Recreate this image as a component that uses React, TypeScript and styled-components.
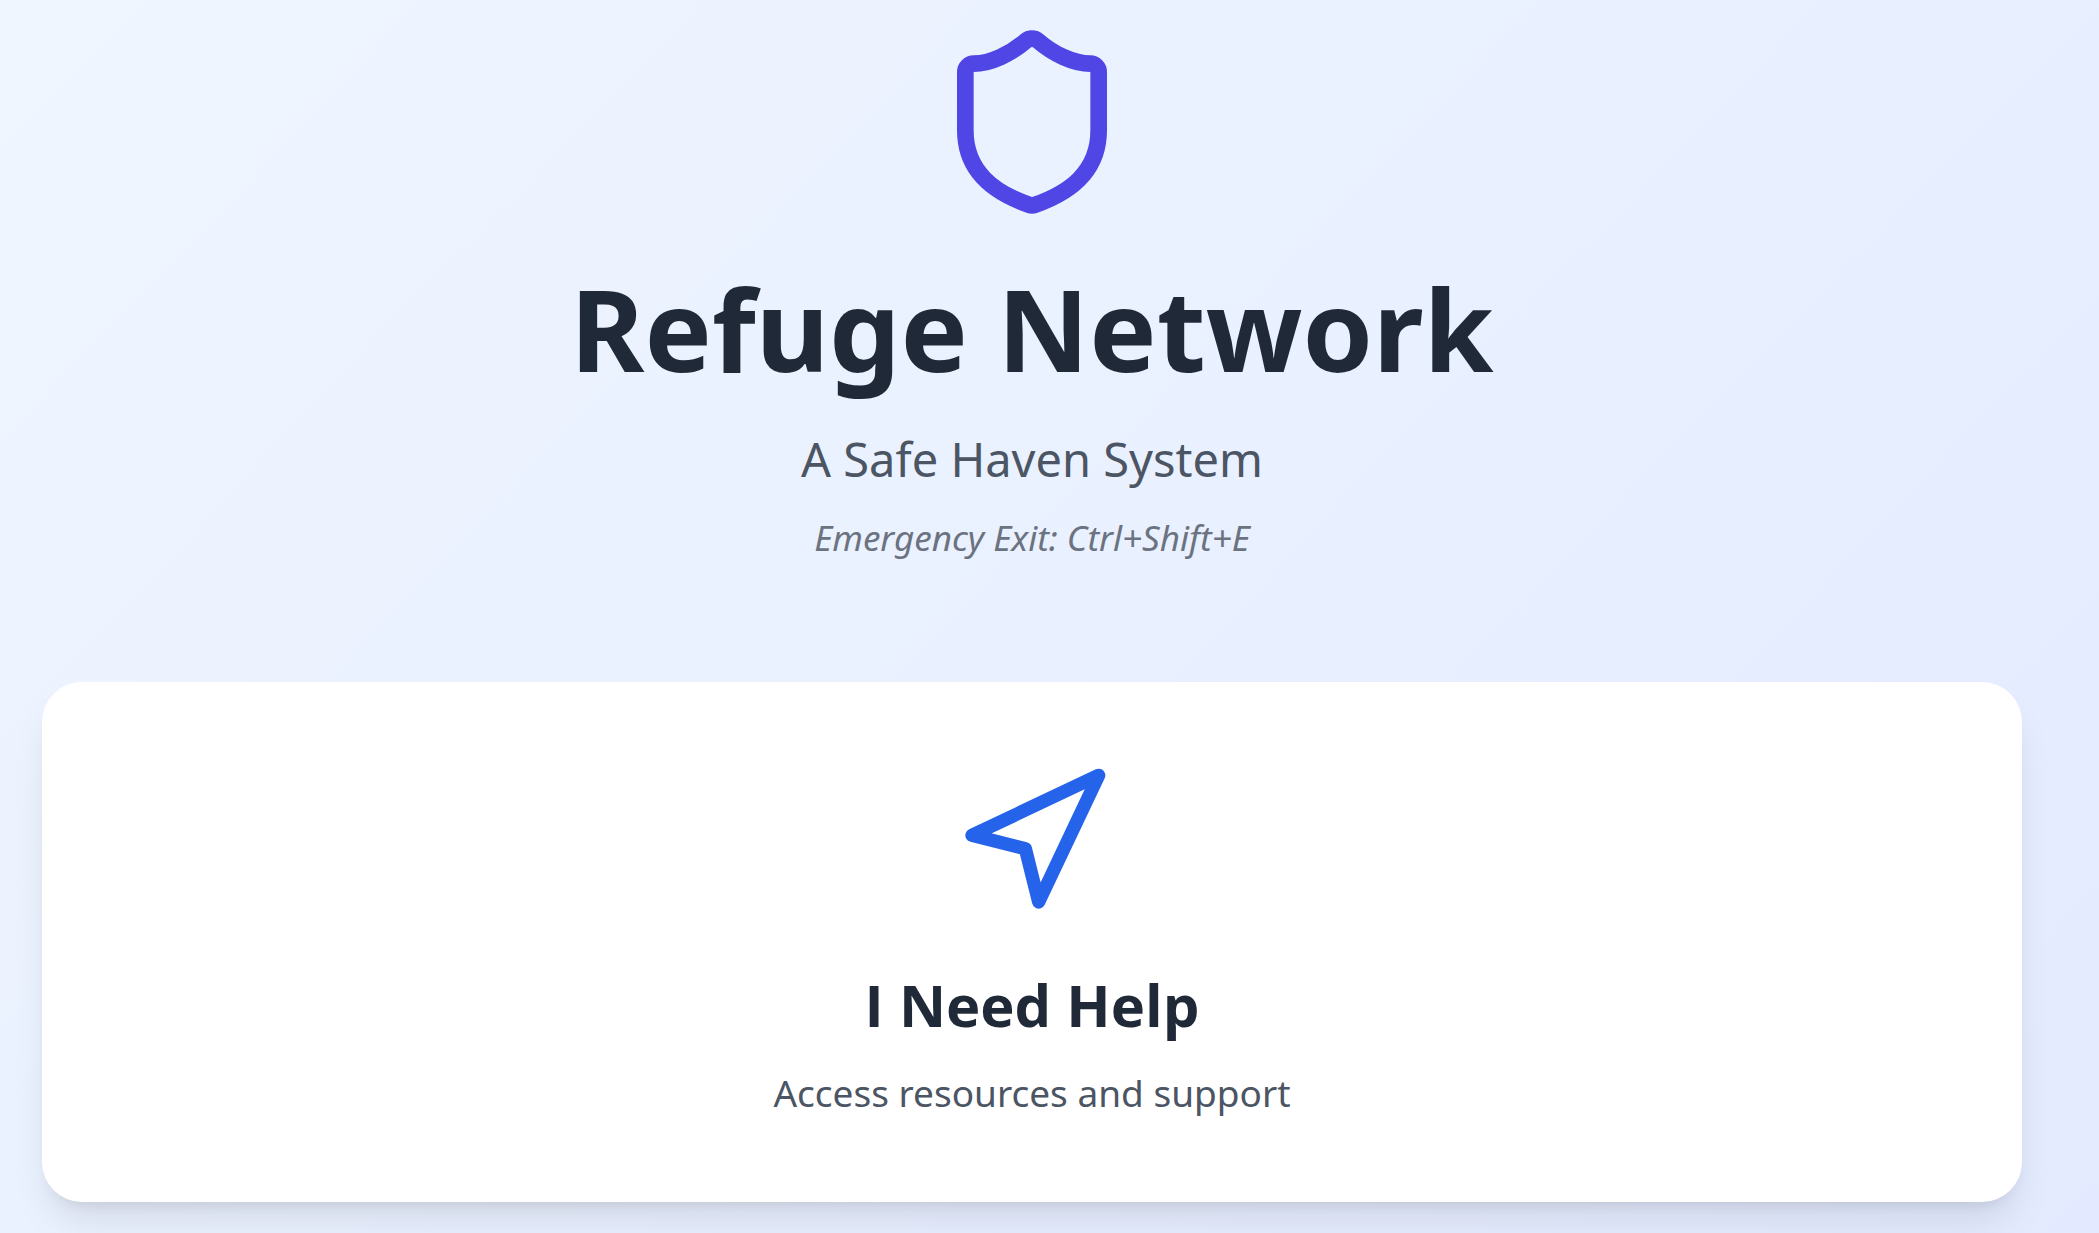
import React from 'react';
import styled, { createGlobalStyle } from 'styled-components';

const GlobalStyle = createGlobalStyle`
  *, *::before, *::after { box-sizing: border-box; }
  body {
    margin: 0;
    font-family: "Segoe UI", "Noto Sans", "Open Sans", sans-serif;
  }
`;

const Page = styled.main`
  min-height: 100vh;
  padding: 22px 77px 31px 42px;
  background: #e0e7ff linear-gradient(to bottom right, #eff6ff, #e0e7ff) 0 0 / 100% 2200px no-repeat;
`;

const Header = styled.header`
  display: flex;
  flex-direction: column;
  align-items: center;
  margin-bottom: 118px;
  text-align: center;
`;

const Icon = styled.svg<{ $size: number; $color: string }>`
  display: block;
  width: ${(p) => p.$size}px;
  height: ${(p) => p.$size}px;
  margin-bottom: 40px;
  fill: none;
  stroke: ${(p) => p.$color};
  stroke-width: 2;
  stroke-linecap: round;
  stroke-linejoin: round;
`;

const Title = styled.h1`
  margin: 0 0 28px;
  font-size: 113px;
  line-height: 132px;
  font-weight: 700;
  color: #1f2937;
`;

const Subtitle = styled.p`
  margin: 0 0 16px;
  font-size: 47px;
  line-height: 74px;
  color: #4b5563;
`;

const ExitHint = styled.p`
  margin: 0;
  font-size: 35px;
  line-height: 52px;
  font-style: italic;
  color: #6b7280;
`;

const ActionCard = styled.button`
  display: flex;
  flex-direction: column;
  align-items: center;
  width: 100%;
  padding: 80px 80px 78px;
  border: 0;
  border-radius: 40px;
  background: #ffffff;
  box-shadow: 0 25px 38px -8px rgba(0, 0, 0, 0.1), 0 10px 15px -10px rgba(0, 0, 0, 0.1);
  font-family: inherit;
  cursor: pointer;
`;

const CardTitle = styled.span`
  margin-bottom: 14px;
  font-family: "Segoe UI", "Open Sans", sans-serif;
  font-size: 58px;
  line-height: 86px;
  font-weight: 700;
  color: #1f2937;
`;

const CardText = styled.span`
  font-size: 37px;
  line-height: 62px;
  color: #4b5563;
`;

export default function App() {
  return (
    <>
      <GlobalStyle />
      <Page>
        <Header>
          <Icon $size={200} $color="#4f46e5" viewBox="0 0 24 24" aria-hidden="true">
            <path d="M20 13c0 5-3.5 7.5-7.66 8.95a1 1 0 0 1-.67-.01C7.5 20.5 4 18 4 13V6a1 1 0 0 1 1-1c2 0 4.5-1.2 6.24-2.72a1.17 1.17 0 0 1 1.52 0C14.51 3.81 17 5 19 5a1 1 0 0 1 1 1z" />
          </Icon>
          <Title>Refuge Network</Title>
          <Subtitle>A Safe Haven System</Subtitle>
          <ExitHint>Emergency Exit: Ctrl+Shift+E</ExitHint>
        </Header>
        <ActionCard type="button">
          <Icon $size={160} $color="#2563eb" viewBox="0 0 24 24" aria-hidden="true">
            <polygon points="3 11 22 2 13 21 11 13 3 11" />
          </Icon>
          <CardTitle>I Need Help</CardTitle>
          <CardText>Access resources and support</CardText>
        </ActionCard>
      </Page>
    </>
  );
}
